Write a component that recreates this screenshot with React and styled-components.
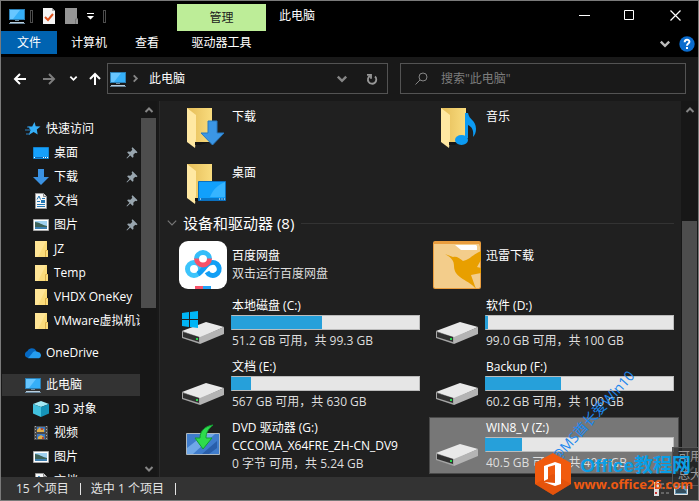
import React from "react";
import styled, { createGlobalStyle } from "styled-components";

const GlobalStyle = createGlobalStyle`
  *, *::before, *::after { box-sizing: border-box; }
  body { margin: 0; background: #191919; }
  button, input { font: inherit; color: inherit; }
  svg { display: block; flex: none; }
  ul { list-style: none; margin: 0; padding: 0; }
`;

const Window = styled.div`
  position: relative;
  display: flex;
  flex-direction: column;
  height: 100vh;
  overflow: hidden;
  border: 1px solid #7a7a7a;
  background: #191919;
  color: #fff;
  font: 12px/18px "Open Sans", "Noto Sans CJK SC", sans-serif;
`;

/* ---------- title bar and ribbon ---------- */
const Ribbon = styled.header`
  display: grid;
  grid-template-columns: 176px 89px 1fr auto;
  grid-template-rows: 30px 26px;
  background: #000;
`;

const QuickAccess = styled.div`
  display: flex;
  align-items: center;
  padding-left: 8px;
`;

const PlainButton = styled.button`
  display: flex;
  align-items: center;
  justify-content: center;
  border: 0;
  padding: 0;
  background: none;
  width: ${(p) => p.$w || 22}px;
  height: ${(p) => p.$h || 22}px;
`;

const Separator = styled.span`
  width: 3px;
  height: 13px;
  margin: 0 5px;
  border: 1px solid #4d4d4d;
`;

const ContextTitle = styled.div`
  margin-top: 3px;
  background: #bded98;
  color: #1c1c1c;
  text-align: center;
  line-height: 27px;
`;

const WindowTitle = styled.h1`
  margin: 0;
  padding-left: 13px;
  font-size: 12px;
  font-weight: 400;
  line-height: 30px;
`;

const WindowButtons = styled.div`
  display: flex;
`;

const Tabs = styled.nav`
  display: flex;
  height: 23px;
`;

const Tab = styled.button`
  border: 0;
  padding: 0 14px;
  height: 23px;
  line-height: 23px;
  white-space: nowrap;
  background: ${(p) => (p.$file ? "#0063b1" : "transparent")};
  ${(p) => p.$file && "padding: 0 16px;"}
`;

const RibbonTools = styled.div`
  grid-column: 3 / 5;
  display: flex;
  align-items: center;
  justify-content: flex-end;
`;

/* ---------- address row ---------- */
const AddressRow = styled.div`
  display: flex;
  align-items: center;
  height: 44px;
  padding: 0 12px 1px 5px;
`;

const Field = styled.div`
  display: flex;
  align-items: center;
  height: 31px;
  border: 1px solid #535353;
  background: #191919;
`;

const AddressBox = styled(Field)`
  flex: 277 1 0;
  min-width: 0;
  padding-left: 2px;
`;

const Crumb = styled.button`
  flex: 1;
  border: 0;
  padding: 0 0 0 5px;
  background: none;
  text-align: left;
`;

const SearchBox = styled(Field)`
  flex: 270 1 0;
  min-width: 0;
  margin-left: 12px;
  padding-left: 14px;
`;

const SearchInput = styled.input`
  flex: 1;
  min-width: 0;
  margin-left: 13px;
  border: 0;
  padding: 0;
  outline: 0;
  background: none;
  &::placeholder { color: #7d7d7d; opacity: 1; }
`;

/* ---------- body ---------- */
const Body = styled.div`
  display: flex;
  flex: 1;
  min-height: 0;
`;

const Sidebar = styled.aside`
  display: flex;
  width: 159px;
  flex: none;
  padding-right: 2px;
  border-right: 1px solid #2b2b2b;
`;

const Tree = styled.nav`
  flex: 1;
  min-width: 0;
  overflow: hidden;
  padding: 17px 0 0 1px;
`;

const TreeGroup = styled.ul`
  margin-bottom: 10px;
`;

const TreeItem = styled.a`
  display: flex;
  align-items: center;
  gap: 5px;
  height: 22px;
  margin-bottom: 2px;
  padding-left: ${(p) => (p.$child ? 31 : 23)}px;
  padding-right: ${(p) => (p.$pinned ? 2 : 0)}px;
  color: inherit;
  text-decoration: none;
  white-space: nowrap;
  overflow: hidden;
  background: ${(p) => (p.$active ? "#333" : "transparent")};
  svg:last-child:not(:first-child) { margin-left: auto; }
`;

const ScrollBar = styled.div`
  display: flex;
  flex-direction: column;
  flex: none;
  width: 17px;
  padding: 0 1px;
  background: #171717;
`;

const ScrollTrack = styled.div`
  flex: 1;
  display: grid;
  grid-template-rows: ${(p) => `${p.$before}fr ${p.$size}fr ${p.$after}fr`};
`;

const ScrollThumb = styled.div`
  grid-row: 2;
  background: #4d4d4d;
`;

const Files = styled.main`
  flex: 1;
  min-width: 0;
  overflow: hidden;
  background: #202020;
  padding: 1px 0 0 15px;
`;

const FolderGrid = styled.div`
  display: grid;
  grid-template-columns: repeat(auto-fill, 250px);
  column-gap: 4px;
  grid-auto-rows: 56px;
`;

const TileGrid = styled(FolderGrid)`
  grid-auto-rows: 57px;
  row-gap: 4px;
`;

const Tile = styled.article`
  display: flex;
  gap: 4px;
  padding: ${(p) => (p.$app ? 6 : 1)}px 4px 0 3px;
  border: 1px solid ${(p) => (p.$selected ? "#4a4a4a" : "transparent")};
  background: ${(p) => (p.$selected ? "#777" : "transparent")};
`;

const DeviceIcon = styled.div`
  padding-top: 5px;
`;

const TileText = styled.div`
  flex: 1;
  min-width: 0;
  white-space: nowrap;
  padding-top: ${(p) => p.$top || 0}px;
`;

const TileName = styled.div`
  padding-left: 1px;
  line-height: 18px;
`;

const TileDetail = styled(TileName)`
  color: #dedede;
`;

const GroupHeader = styled.h2`
  display: flex;
  align-items: center;
  gap: 5px;
  margin: 0 0 2px -9px;
  height: 18px;
  padding-right: 7px;
  font-size: 15px;
  font-weight: 400;
  line-height: 18px;
  &::after {
    content: "";
    flex: 1;
    height: 1px;
    margin-left: 2px;
    background: #333;
  }
`;

const Meter = styled.div`
  height: 15px;
  margin-bottom: 2px;
  border: 1px solid #bcbcbc;
  border-left-color: #26a0da;
  background: #e6e6e6;
`;

const MeterFill = styled.div`
  height: 100%;
  width: ${(p) => p.$value}%;
  background: #26a0da;
`;

/* ---------- status bar ---------- */
const StatusBar = styled.footer`
  display: flex;
  align-items: center;
  height: 23px;
  padding: 0 9px 0 15px;
  gap: 10px;
  background: #333;
  color: #e4e4e4;
`;

const StatusItem = styled.span`
  padding-right: 11px;
  border-right: 1px solid #e4e4e4;
  line-height: 12px;
`;

const ViewButtons = styled.div`
  display: flex;
  margin-left: auto;
`;

/* ---------- overlays ---------- */
const Tooltip = styled.div`
  position: absolute;
  right: -22px;
  bottom: 14px;
  width: 48px;
  height: 39px;
  padding: 0 5px;
  border: 1px solid #555;
  background: rgba(43, 43, 43, 0.7);
  color: #9a9a9a;
  white-space: nowrap;
`;

const AuthorMark = styled.div`
  position: absolute;
  right: 47px;
  bottom: 75px;
  color: #1c87ee;
  font-size: 14px;
  white-space: nowrap;
  transform: rotate(-48deg);
`;

const SiteMark = styled.div`
  position: absolute;
  right: 5px;
  bottom: 5px;
  display: flex;
  align-items: center;
  gap: 2px;
`;

const SiteName = styled.div`
  color: #0a9ee6;
  padding-right: 2px;
  text-align: right;
  font: 700 19px/20px "Liberation Sans", "Noto Sans CJK SC", sans-serif;
`;

const SiteUrl = styled.div`
  color: #ee5a12;
  font: 700 13px/16px "Open Sans", sans-serif;
`;

/* ---------- icons ---------- */
const PcIcon = () => (
  <svg width="16" height="16" viewBox="0 0 16 16">
    <path d="M0 1h16v11H0z" fill="#2a7fb5" />
    <path d="M1 2h14v9H1z" fill="#35aff8" />
    <path d="M1 2h10L4 11H1z" fill="#67c6ff" />
    <path d="M6 12h4v1H6z" fill="#6f8fa6" />
    <path d="M1 14h14v1H1z" fill="#b9cedd" />
    <path d="M0 15h16v1H0z" fill="#668399" />
  </svg>
);
const ChecklistIcon = () => (
  <svg width="12" height="16" viewBox="0 0 12 16">
    <path d="M0 0h9l3 3v13H0z" fill="#f4f4f4" />
    <path d="M9 0v3h3z" fill="#aaa" />
    <path d="M2 9l3 3 5-6" fill="none" stroke="#e0521d" strokeWidth="2" />
  </svg>
);
const GreyFolderIcon = () => (
  <svg width="13" height="16" viewBox="0 0 13 16">
    <path d="M0 0h12v10l1 1v5H0z" fill="#969696" />
    <path d="M10.500 16v-5h2" fill="none" stroke="#777" />
  </svg>
);
const MenuArrowIcon = () => (
  <svg width="9" height="8" viewBox="0 0 9 8">
    <path d="M1 1h7v1H1zM1 4h7L4.500 7.500z" fill="#fff" />
  </svg>
);
const MinimizeIcon = () => (
  <svg width="11" height="11"><path d="M0 5h11v1H0z" fill="#fff" /></svg>
);
const MaximizeIcon = () => (
  <svg width="11" height="11"><path d="M.5.5h9v9h-9z" fill="none" stroke="#fff" /></svg>
);
const CloseIcon = () => (
  <svg width="11" height="11"><path d="M.5.5l10 10M10.500.5l-10 10" stroke="#fff" strokeWidth="1.200" /></svg>
);
const Chevron = ({ turn = 0, color = "#fff", size = 10, weight = 2 }) => (
  <svg width={size} height={size} viewBox="0 0 10 10">
    <path d="M1.500 3l3.500 3.500L8.500 3" transform={`rotate(${turn} 5 5)`} fill="none" stroke={color} strokeWidth={weight} />
  </svg>
);
const HelpIcon = () => (
  <svg width="16" height="16" viewBox="0 0 16 16">
    <circle cx="8" cy="8" r="7.700" fill="#0a6cce" />
    <path d="M5.700 6.200C5.700 3 10.400 3.200 10.400 5.800 10.400 7.600 8 7.500 8 9.700M8 11v2" fill="none" stroke="#fff" strokeWidth="2" />
  </svg>
);
const Arrow = ({ turn = 0, color = "#fff" }) => (
  <svg width="14" height="14" viewBox="0 0 14 14">
    <path d="M13 7H2M7 2L2 7l5 5" transform={`rotate(${turn} 7 7)`} fill="none" stroke={color} strokeWidth="2" />
  </svg>
);
const RefreshIcon = () => (
  <svg width="12" height="12" viewBox="0 0 12 12">
    <path d="M9 3.500a4.200 4.200 0 1 1-5-.6" fill="none" stroke="#979797" strokeWidth="1.800" />
    <path d="M1 1.800h4v4" fill="none" stroke="#979797" strokeWidth="1.800" />
  </svg>
);
const SearchIcon = () => (
  <svg width="13" height="13" viewBox="0 0 13 13">
    <circle cx="8" cy="5" r="4" fill="none" stroke="#858585" />
    <path d="M5 8l-4.500 4.500" stroke="#858585" />
  </svg>
);
const StarIcon = () => (
  <svg width="16" height="16" viewBox="0 0 16 16">
    <path d="M9.500 1l1.200 4.300 4.800.2-3.700 3 .9 5L8.600 11l-4.800 3 1.700-4.900L3 5.600l4.200-.1z" fill="#35aff8" />
    <path d="M2 6h3M0 9h5M1 13h4" stroke="#2b83c4" />
  </svg>
);
const DesktopIcon = () => (
  <svg width="16" height="16" viewBox="0 0 16 16">
    <path d="M.5 2.500h15v11H.5z" fill="#16a0fb" stroke="#1283d0" />
    <path d="M1 12h14v1H1z" fill="#0b67b3" />
    <path d="M1 12h1v1H1zM10 12h1v1h-1zM12 12h1v1h-1zM14 12h1v1h-1z" fill="#fff" />
  </svg>
);
const DownloadIcon = () => (
  <svg width="16" height="16" viewBox="0 0 16 16">
    <path d="M5 0h6v8h5l-8 8-8-8h5z" fill="#3b92e2" />
  </svg>
);
const DocumentIcon = () => (
  <svg width="16" height="16" viewBox="0 0 16 16">
    <path d="M2.500.5h8l3 3v12h-11z" fill="#f8f8f8" stroke="#9a9a9a" />
    <path d="M10.500.5v3h3" fill="#ddd" stroke="#888" />
    <path d="M4 6.500l2-3.500 1.500 3.500M9 5.500h3M4 8.500h3M4 13.500h8M4 11.500h8" fill="none" stroke="#2478b5" />
    <path d="M8 7h4v3H8z" fill="#2478b5" />
  </svg>
);
const PictureIcon = () => (
  <svg width="16" height="16" viewBox="0 0 16 16">
    <path d="M.5 2.500h15v11H.5z" fill="#fff" stroke="#a8a8a8" />
    <path d="M2 4h12v8H2z" fill="#9ed0f0" />
    <path d="M2 5c4 0 7 3 12 4v1H2z" fill="#3d6259" />
    <path d="M2 10h12v2H2z" fill="#3c7eaf" />
  </svg>
);
const FolderIcon = () => (
  <svg width="16" height="16" viewBox="0 0 16 16">
    <path d="M2 0h12v9h1v7H2z" fill="#fbdc7b" />
    <path d="M2 0h11L5 16H2z" fill="#ffe596" />
    <path d="M12.500 16v-6.500h2" fill="none" stroke="#deb24c" />
  </svg>
);
const CloudIcon = () => (
  <svg width="16" height="16" viewBox="0 0 16 16">
    <path d="M1 12a3.600 3.600 0 0 1 1.500-6C4 3 9 2 11.300 6L6 13H3z" fill="#0669c2" />
    <path d="M7 8.500A4 4 0 0 1 13 7a3.300 3.300 0 0 1 1 6.300H3z" fill="#259df0" />
  </svg>
);
const CubeIcon = () => (
  <svg width="16" height="16" viewBox="0 0 16 16">
    <path d="M8 0l8 3-8 3-8-3z" fill="#a3eaf5" />
    <path d="M0 3l8 3v10l-8-3.500z" fill="#42c1de" />
    <path d="M16 3L8 6v10l8-3.500z" fill="#1593b8" />
  </svg>
);
const VideoIcon = () => (
  <svg width="16" height="16" viewBox="0 0 16 16">
    <path d="M1 1h14v14H1z" fill="#4b4b4b" />
    <path d="M2.500 1v14M13.500 1v14" stroke="#aaa" strokeDasharray="1 2" />
    <path d="M4 2h8v5H4zM4 9h8v5H4z" fill="#3978c5" />
    <path d="M4 5l3-3 1 3 3-1v3H4zM5 12l3-2 3 2v2H5z" fill="#dfae49" />
    <path d="M8 3h2v2H8zM9 12h2v2H9z" fill="#b84c34" />
  </svg>
);
const PinIcon = () => (
  <svg width="12" height="12" viewBox="0 0 12 12">
    <path d="M6.500 1L11 5.500l-1.200.5-.5-.2-2 2 .2 2.200-1 .8L4.300 8.600 1 11.500l-.5-.5 3-3.200L1.200 5.500l.8-1 2.400.2 2-2-.4-.5z" fill="#98a5ae" />
    <path d="M6 0.800l5 5" stroke="#98a5ae" strokeWidth="1.500" />
  </svg>
);

const BigFolderIcon = ({ children }) => (
  <svg width="48" height="48" viewBox="0 0 48 48">
    <defs>
      <linearGradient id="folderBack" x1="0" x2="1">
        <stop offset="0" stopColor="#e5bd58" />
        <stop offset="1" stopColor="#f9dc7e" />
      </linearGradient>
    </defs>
    <path d="M8 4h25v34H8z" fill="url(#folderBack)" />
    <path d="M8 4l9 7v24l-1 9-8-6z" fill="#ffe8a2" />
    <path d="M16 38h15l-10 3h-5z" fill="#151515" />
    {children}
  </svg>
);
const BigArrow = () => (
  <path d="M29 17h9v12h7L33.500 41 22 29h7z" fill="#3b96e5" stroke="#2779c1" />
);
const BigDesktop = () => (
  <>
    <path d="M19.500 21.500h27v19h-27z" fill="#11a0fb" stroke="#0a70bf" />
    <path d="M46 22v15H31c3-8 8-12 15-15z" fill="#36b4ff" />
    <path d="M20 38h26v2H20z" fill="#0a76c6" />
    <path d="M21 39h1M40 39h1M42.500 39h1M45 39h1" stroke="#fff" />
  </>
);
const BigNote = () => (
  <>
    <path d="M32 9h3c1 7 8 7 8 16 0 3-1 6-3 8 1-7-1-10-5-12v13h-3z" fill="#0c9bf3" />
    <ellipse cx="28.500" cy="36" rx="6.500" ry="5" fill="#0c9bf3" />
  </>
);
const BaiduIcon = () => (
  <svg width="48" height="48" viewBox="0 0 48 48">
    <rect width="48" height="48" rx="9" fill="#fff" />
    <g fill="none" strokeWidth="5">
      <circle cx="15" cy="28" r="6.500" stroke="#3cc4fb" />
      <path d="M19 33c5-3 7-9 12-11a6.500 6.500 0 1 1-3 9" stroke="#139ff5" />
      <path d="M17.500 18a6.500 6.500 0 0 1 13 0" stroke="#35bdf9" />
      <path d="M17.500 17.500a6.500 6.500 0 0 0 13 0" stroke="#f75168" />
    </g>
    <path d="M16 45h8v3h-8z" fill="#f75168" />
    <path d="M24 45h8v3h-8z" fill="#22a2f5" />
  </svg>
);
const XunleiIcon = () => (
  <svg width="48" height="48" viewBox="0 0 48 48">
    <rect width="48" height="48" rx="2" fill="#e99d3e" />
    <path d="M1 3h45l1 3v40l-1 1H2l-1-1z" fill="#f3cd8b" />
    <path d="M22 4h21l1 1v4H28z" fill="#fff" />
    <path d="M12 13l8 3c4-1 6 1 10 4 6-1 9-6 18-10v9l-4 7 4 1v5l-10 2 5 14C37 39 21 38 21 25c0-5-2-8-9-12z" fill="#e89f00" />
  </svg>
);
const DriveIcon = ({ system }) => (
  <svg width="48" height="48" viewBox="0 0 48 48">
    <path d="M3 29l24-9 18 5-24 11z" fill="#e9e9e9" />
    <path d="M3 29l18 6v7L3 36z" fill="#a5a5a5" />
    <path d="M4 30l16 5v5L4 35z" fill="#303030" />
    <path d="M21 35l24-10v7L21 42z" fill="#b4b4b4" />
    <path d="M17 36h2v2h-2z" fill="#29d54b" />
    {system && (
      <path d="M3 11l7-1v7H3zM11 10l8-1v8h-8zM3 18h7v7l-7-1zM11 18h8v8l-8-1z" fill="#00b5f5" />
    )}
  </svg>
);
const DiscIcon = () => (
  <svg width="48" height="48" viewBox="0 0 48 48">
    <path d="M7.500 9.500h33v21h-33z" fill="#3f7ccc" stroke="#aeb8be" />
    <path d="M8 24l18-14h10L14 30H8z" fill="#70a8e8" />
    <path d="M23 30L38 17v7l-8 6z" fill="#295eaa" />
    <path d="M34 1c-7 1-13 5-13 13h-5l8 11 9-11h-6c0-5 2-9 7-13z" fill="#2edb4c" stroke="#139d32" />
  </svg>
);
const DetailsViewIcon = () => (
  <svg width="16" height="14" viewBox="0 0 16 14">
    <path d="M0 0h5v14H0z" fill="#ddd" />
    <path d="M1 5h2v2H1zM1 10h2v2H1z" fill="#c33" />
    <path d="M7 2h3M12 2h3M7 6h3M12 6h3M7 11h3M12 11h3" stroke="#999" />
  </svg>
);
const LargeViewIcon = () => (
  <svg width="14" height="14" viewBox="0 0 14 14">
    <path d="M.5 1.500h13v11H.5z" fill="#6c9bb8" stroke="#e6e6e6" />
    <path d="M2 8l5-3 5 4v2H2z" fill="#344f60" />
  </svg>
);
const OfficeLogo = () => (
  <svg width="36" height="42" viewBox="0 0 36 42">
    <path d="M18 0l18 10v21L18 42 0 31V10z" fill="#f15a0e" />
    <path d="M0 31l18-10 18 10-18 11z" fill="#d94b08" opacity=".5" />
    <path d="M9 13l11-4 6 2v20l-6 2-11-4 11 1V12l-7 2v12l-4 2z" fill="#fff" />
  </svg>
);

/* ---------- data ---------- */
const quickItems = [
  { label: "桌面", Icon: DesktopIcon, pinned: true },
  { label: "下载", Icon: DownloadIcon, pinned: true },
  { label: "文档", Icon: DocumentIcon, pinned: true },
  { label: "图片", Icon: PictureIcon, pinned: true },
  { label: "JZ", Icon: FolderIcon },
  { label: "Temp", Icon: FolderIcon },
  { label: "VHDX OneKey", Icon: FolderIcon },
  { label: "VMware虚拟机设", Icon: FolderIcon },
];
const pcItems = [
  { label: "3D 对象", Icon: CubeIcon },
  { label: "视频", Icon: VideoIcon },
  { label: "图片", Icon: PictureIcon },
  { label: "文档", Icon: DocumentIcon },
];
const drives = [
  { name: "本地磁盘 (C:)", used: 48, detail: "51.2 GB 可用，共 99.3 GB", system: true },
  { name: "软件 (D:)", used: 1, detail: "99.0 GB 可用，共 100 GB" },
  { name: "文档 (E:)", used: 10, detail: "567 GB 可用，共 630 GB" },
  { name: "Backup (F:)", used: 40, detail: "60.2 GB 可用，共 100 GB" },
];
const selectedDrive = { name: "WIN8_V (Z:)", used: 19, detail: "40.5 GB 可用，共 49.9 GB", selected: true };

const Branch = ({ label, Icon, active, items = [] }) => (
  <TreeGroup>
    <li>
      <TreeItem href="#" $active={active}><Icon /><span>{label}</span></TreeItem>
    </li>
    {items.map((item) => (
      <li key={item.label}>
        <TreeItem href="#" $child $pinned={item.pinned}>
          <item.Icon />
          <span>{item.label}</span>
          {item.pinned && <PinIcon />}
        </TreeItem>
      </li>
    ))}
  </TreeGroup>
);

const Scroll = ({ before, size, after }) => (
  <ScrollBar>
    <PlainButton $w={15} $h={17} aria-label="向上滚动"><Chevron turn={180} color="#858585" /></PlainButton>
    <ScrollTrack $before={before} $size={size} $after={after}><ScrollThumb /></ScrollTrack>
    <PlainButton $w={15} $h={17} aria-label="向下滚动"><Chevron color="#858585" /></PlainButton>
  </ScrollBar>
);

const Folder = ({ name, children }) => (
  <Tile>
    <BigFolderIcon>{children}</BigFolderIcon>
    <TileText $top={4}><TileName>{name}</TileName></TileText>
  </Tile>
);

const Drive = ({ name, used, detail, system, selected }) => (
  <Tile $selected={selected}>
    <DeviceIcon><DriveIcon system={system} /></DeviceIcon>
    <TileText>
      <TileName>{name}</TileName>
      <Meter role="meter" aria-label={name} aria-valuenow={used} aria-valuemin={0} aria-valuemax={100}>
        <MeterFill $value={used} />
      </Meter>
      <TileDetail>{detail}</TileDetail>
    </TileText>
  </Tile>
);

export default function App() {
  return (
    <Window>
      <GlobalStyle />
      <Ribbon>
        <QuickAccess>
          <PcIcon />
          <Separator />
          <PlainButton aria-label="属性"><ChecklistIcon /></PlainButton>
          <PlainButton aria-label="新建文件夹"><GreyFolderIcon /></PlainButton>
          <PlainButton aria-label="自定义快速访问工具栏" $w={16}><MenuArrowIcon /></PlainButton>
          <Separator />
        </QuickAccess>
        <ContextTitle>管理</ContextTitle>
        <WindowTitle>此电脑</WindowTitle>
        <WindowButtons>
          <PlainButton $w={46} $h={29} aria-label="最小化"><MinimizeIcon /></PlainButton>
          <PlainButton $w={45} $h={29} aria-label="最大化"><MaximizeIcon /></PlainButton>
          <PlainButton $w={46} $h={29} aria-label="关闭"><CloseIcon /></PlainButton>
        </WindowButtons>
        <Tabs>
          <Tab $file>文件</Tab>
          <Tab>计算机</Tab>
          <Tab>查看</Tab>
        </Tabs>
        <Tab>驱动器工具</Tab>
        <RibbonTools>
          <PlainButton aria-label="展开功能区"><Chevron size={12} color="#bbb" /></PlainButton>
          <PlainButton aria-label="帮助"><HelpIcon /></PlainButton>
        </RibbonTools>
      </Ribbon>

      <AddressRow>
        <PlainButton $w={28} aria-label="后退"><Arrow /></PlainButton>
        <PlainButton $w={30} aria-label="前进"><Arrow turn={180} color="#7d7d7d" /></PlainButton>
        <PlainButton $w={18} aria-label="最近位置"><Chevron size={9} /></PlainButton>
        <PlainButton $w={25} aria-label="向上"><Arrow turn={90} /></PlainButton>
        <AddressBox>
          <PcIcon />
          <PlainButton $w={18} aria-label="位置"><Chevron turn={-90} size={9} color="#868686" /></PlainButton>
          <Crumb>此电脑</Crumb>
          <PlainButton $w={30} aria-label="以前的位置"><Chevron size={12} color="#868686" /></PlainButton>
          <PlainButton $w={30} aria-label="刷新"><RefreshIcon /></PlainButton>
        </AddressBox>
        <SearchBox>
          <SearchIcon />
          <SearchInput type="search" aria-label="搜索" placeholder={'搜索"此电脑"'} />
        </SearchBox>
      </AddressRow>

      <Body>
        <Sidebar>
          <Tree aria-label="导航窗格">
            <Branch label="快速访问" Icon={StarIcon} items={quickItems} />
            <Branch label="OneDrive" Icon={CloudIcon} />
            <Branch label="此电脑" Icon={PcIcon} active items={pcItems} />
          </Tree>
          <Scroll before={0} size={190} after={152} />
        </Sidebar>
        <Files>
          <FolderGrid>
            <Folder name="下载"><BigArrow /></Folder>
            <Folder name="音乐"><BigNote /></Folder>
            <Folder name="桌面"><BigDesktop /></Folder>
          </FolderGrid>
          <GroupHeader>
            <Chevron size={12} color="#777" weight={1} />
            <span>设备和驱动器 (8)</span>
          </GroupHeader>
          <TileGrid>
            <Tile $app>
              <BaiduIcon />
              <TileText $top={6}>
                <TileName>百度网盘</TileName>
                <TileDetail>双击运行百度网盘</TileDetail>
              </TileText>
            </Tile>
            <Tile $app>
              <XunleiIcon />
              <TileText $top={6}><TileName>迅雷下载</TileName></TileText>
            </Tile>
            {drives.map((d) => <Drive key={d.name} {...d} />)}
            <Tile>
              <DeviceIcon><DiscIcon /></DeviceIcon>
              <TileText>
                <TileName>DVD 驱动器 (G:)</TileName>
                <TileName>CCCOMA_X64FRE_ZH-CN_DV9</TileName>
                <TileDetail>0 字节 可用，共 5.24 GB</TileDetail>
              </TileText>
            </Tile>
            <Drive {...selectedDrive} />
          </TileGrid>
        </Files>
        <Scroll before={103} size={239} after={0} />
      </Body>

      <StatusBar>
        <StatusItem>15 个项目</StatusItem>
        <StatusItem>选中 1 个项目</StatusItem>
        <ViewButtons>
          <PlainButton $w={22} aria-label="详细信息"><DetailsViewIcon /></PlainButton>
          <PlainButton $w={16} aria-label="大图标"><LargeViewIcon /></PlainButton>
        </ViewButtons>
      </StatusBar>

      <Tooltip role="tooltip">可用空间<br />总大小</Tooltip>
      <AuthorMark>@MS酋长爱Win10</AuthorMark>
      <SiteMark>
        <OfficeLogo />
        <div>
          <SiteName>Office教程网</SiteName>
          <SiteUrl>www.office26.com</SiteUrl>
        </div>
      </SiteMark>
    </Window>
  );
}
